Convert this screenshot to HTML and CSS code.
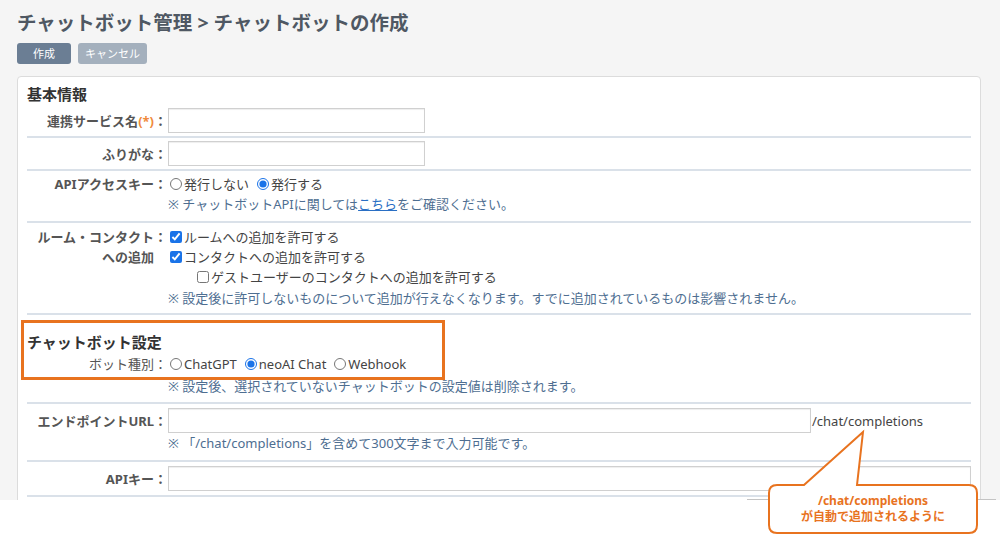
FILE: index.html
```html
<!DOCTYPE html>
<html lang="ja">
<head>
    <meta charset="UTF-8">
    <meta name="viewport" content="width=device-width, initial-scale=1.0">
    <title>チャットボットの作成</title>
    <link rel="stylesheet" href="styles.css">
</head>
<body>
    <div class="screen">
        <div class="page">
            <h1 class="page-title">チャットボット管理 &gt; チャットボットの作成</h1>
            <div class="actions">
                <button class="btn btn-primary">作成</button>
                <button class="btn btn-secondary">キャンセル</button>
            </div>

            <div class="panel">
                <h2 class="section-title">基本情報</h2>

                <div class="row row-input">
                    <div class="label"><span class="label-text">連携サービス名<span class="required">(*)</span></span><span class="colon">：</span></div>
                    <div class="value"><input type="text" class="text-input short"></div>
                </div>

                <div class="row row-input">
                    <div class="label"><span class="label-text">ふりがな</span><span class="colon">：</span></div>
                    <div class="value"><input type="text" class="text-input short"></div>
                </div>

                <div class="row row-api">
                    <div class="label"><span class="label-text">APIアクセスキー</span><span class="colon">：</span></div>
                    <div class="value">
                        <div class="choices">
                            <label class="choice"><input type="radio" name="apikey">発行しない</label>
                            <label class="choice"><input type="radio" name="apikey" checked>発行する</label>
                        </div>
                        <div class="note">※ チャットボットAPIに関しては<a href="#" class="link">こちら</a>をご確認ください。</div>
                    </div>
                </div>

                <div class="row row-room">
                    <div class="label"><span class="label-text">ルーム・コンタクト<br>への追加</span><span class="colon">：</span></div>
                    <div class="value">
                        <label class="choice"><input type="checkbox" checked>ルームへの追加を許可する</label>
                        <label class="choice"><input type="checkbox" checked>コンタクトへの追加を許可する</label>
                        <label class="choice indent"><input type="checkbox">ゲストユーザーのコンタクトへの追加を許可する</label>
                        <div class="note note-room">※ 設定後に許可しないものについて追加が行えなくなります。すでに追加されているものは影響されません。</div>
                    </div>
                </div>

                <h2 class="section-title section-bot">チャットボット設定</h2>

                <div class="row row-bot">
                    <div class="label label-plain"><span class="label-text">ボット種別</span><span class="colon">：</span></div>
                    <div class="value">
                        <div class="choices">
                            <label class="choice"><input type="radio" name="bot">ChatGPT</label>
                            <label class="choice"><input type="radio" name="bot" checked>neoAI Chat</label>
                            <label class="choice"><input type="radio" name="bot">Webhook</label>
                        </div>
                        <div class="note note-bot">※ 設定後、選択されていないチャットボットの設定値は削除されます。</div>
                    </div>
                </div>

                <div class="row row-endpoint">
                    <div class="label"><span class="label-text">エンドポイントURL</span><span class="colon">：</span></div>
                    <div class="value">
                        <div class="url-line">
                            <input type="text" class="text-input url">
                            <span class="suffix">/chat/completions</span>
                        </div>
                        <div class="note">※ 「/chat/completions」を含めて300文字まで入力可能です。</div>
                    </div>
                </div>

                <div class="row row-key">
                    <div class="label"><span class="label-text">APIキー</span><span class="colon">：</span></div>
                    <div class="value"><input type="text" class="text-input wide"></div>
                </div>

                <!-- highlight around chatbot settings -->
                <div class="highlight"></div>
            </div>
        </div>

        <div class="edge-line"></div>

        <div class="callout">
            <svg class="callout-shape" width="225" height="112" viewBox="0 0 225 112">
                <path d="M17 60 L44 60 L103 7 L97 60 L209 60 Q217 60 217 68 L217 100 Q217 108 209 108 L17 108 Q9 108 9 100 L9 68 Q9 60 17 60 Z" fill="#fff" stroke="#e8731f" stroke-width="2"/>
            </svg>
            <div class="callout-text">/chat/completions<br>が自動で追加されるように</div>
        </div>
    </div>
</body>
</html>
```

FILE: styles.css
```css
body {
    margin: 0;
    background: #fff;
    font-family: "Noto Sans", "Noto Sans CJK JP", sans-serif;
    font-size: 13px;
    color: #444;
}

.screen {
    position: relative;
    width: 1000px;
    height: 535px;
    overflow: hidden;
}

.page {
    height: 500px;
    box-sizing: border-box;
    padding: 11px 19px 0 17px;
    background: #f5f5f5;
    overflow: hidden;
}

.page-title {
    margin: 0;
    font-size: 19.5px;
    line-height: 24px;
    font-weight: bold;
    color: #4f5863;
}

.actions {
    display: flex;
    gap: 7px;
    margin-top: 8px;
}

.btn {
    height: 21px;
    border: none;
    border-radius: 3px;
    color: #fff;
    font-family: inherit;
    font-size: 11px;
    line-height: 21px;
    padding: 0 7px;
}

.btn-primary {
    width: 54px;
    background: #6b7e94;
}

.btn-secondary {
    background: #a4b0bd;
}

.panel {
    position: relative;
    margin-top: 12px;
    padding: 0 9px 40px;
    background: #fff;
    border: 1px solid #dcdcdc;
    border-radius: 4px;
}

.section-title {
    margin: 6px 0 0;
    font-size: 15px;
    line-height: 22px;
    font-weight: bold;
    color: #333;
}

.section-bot {
    margin-top: 16px;
}

.row {
    display: grid;
    grid-template-columns: 141px 1fr;
    padding: 3px 0;
    border-bottom: 2px solid #dae1e9;
}

.label {
    display: flex;
    justify-content: flex-end;
    align-items: flex-start;
    padding-right: 1px;
    font-weight: bold;
    color: #555;
    line-height: 20px;
}

.label-plain {
    font-weight: normal;
}

.label-text {
    text-align: right;
}

.required {
    color: #f08a3c;
}

.colon {
    width: 13px;
    text-align: center;
}

.row-input .label,
.row-key .label,
.row-endpoint .label {
    padding-top: 3px;
}

.row-api {
    padding: 3px 0 7px;
}

.row-room {
    padding: 4px 0 5px;
}

.row-bot {
    padding: 1px 0 6px;
}

.row-endpoint {
    padding: 4px 0 7px;
}

.row-key {
    padding: 4px 0;
}

.value {
    line-height: 20px;
    color: #444;
}

.choices {
    display: flex;
    gap: 6px;
}

.choice {
    display: flex;
    align-items: center;
}

.choice input {
    width: 12px;
    height: 12px;
    margin: 0 2px 0 2px;
    accent-color: #1a73e8;
}

.indent {
    padding-left: 27px;
}

.note {
    color: #4e6e91;
}

.note-room {
    margin-top: 1px;
}

.note-bot {
    margin-top: 2px;
}

.link {
    color: #2a6fc4;
    text-decoration: underline;
}

.text-input {
    display: block;
    height: 25px;
    box-sizing: border-box;
    margin: 0;
    border: 1px solid #d0d0d0;
    box-shadow: inset 0 1px 1px rgba(0, 0, 0, 0.07);
    font-family: inherit;
    font-size: 13px;
}

.short {
    width: 257px;
}

.url-line {
    display: flex;
    align-items: center;
}

.url {
    width: 643px;
}

.suffix {
    margin-left: 1px;
    color: #444;
}

.wide {
    width: 100%;
}

.highlight {
    position: absolute;
    left: 3px;
    top: 243px;
    width: 424px;
    height: 60px;
    box-sizing: border-box;
    border: 3px solid #e8731f;
}

.edge-line {
    position: absolute;
    left: 747px;
    top: 499px;
    width: 249px;
    height: 1px;
    background: #c4c4c4;
}

.callout {
    position: absolute;
    left: 760px;
    top: 425px;
    width: 225px;
    height: 112px;
}

.callout-shape {
    position: absolute;
    left: 0;
    top: 0;
}

.callout-text {
    position: absolute;
    left: 9px;
    top: 68px;
    width: 208px;
    text-align: center;
    font-size: 12px;
    line-height: 16px;
    font-weight: bold;
    color: #e8731f;
}
```
